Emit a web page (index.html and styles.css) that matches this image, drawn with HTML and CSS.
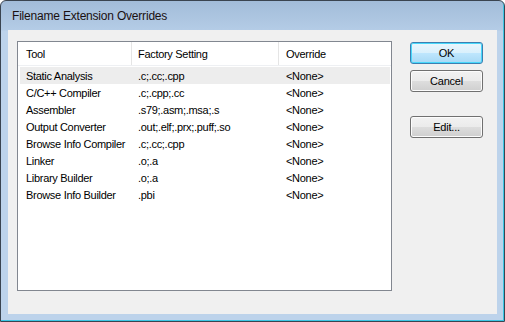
FILE: index.html
```html
<!DOCTYPE html>
<html lang="en">
<head>
    <meta charset="UTF-8">
    <meta name="viewport" content="width=device-width, initial-scale=1.0">
    <title>Filename Extension Overrides</title>
    <link rel="stylesheet" href="styles.css">
</head>
<body>

    <div class="window">
        <div class="titlebar">Filename Extension Overrides</div>

        <div class="client">
            <div class="listbox">
                <div class="row header">
                    <div class="cell col-tool">Tool</div>
                    <div class="cell col-factory">Factory Setting</div>
                    <div class="cell col-override">Override</div>
                </div>
                <div class="row selected">
                    <div class="cell col-tool">Static Analysis</div>
                    <div class="cell col-factory">.c;.cc;.cpp</div>
                    <div class="cell col-override">&lt;None&gt;</div>
                </div>
                <div class="row">
                    <div class="cell col-tool">C/C++ Compiler</div>
                    <div class="cell col-factory">.c;.cpp;.cc</div>
                    <div class="cell col-override">&lt;None&gt;</div>
                </div>
                <div class="row">
                    <div class="cell col-tool">Assembler</div>
                    <div class="cell col-factory">.s79;.asm;.msa;.s</div>
                    <div class="cell col-override">&lt;None&gt;</div>
                </div>
                <div class="row">
                    <div class="cell col-tool">Output Converter</div>
                    <div class="cell col-factory">.out;.elf;.prx;.puff;.so</div>
                    <div class="cell col-override">&lt;None&gt;</div>
                </div>
                <div class="row">
                    <div class="cell col-tool">Browse Info Compiler</div>
                    <div class="cell col-factory">.c;.cc;.cpp</div>
                    <div class="cell col-override">&lt;None&gt;</div>
                </div>
                <div class="row">
                    <div class="cell col-tool">Linker</div>
                    <div class="cell col-factory">.o;.a</div>
                    <div class="cell col-override">&lt;None&gt;</div>
                </div>
                <div class="row">
                    <div class="cell col-tool">Library Builder</div>
                    <div class="cell col-factory">.o;.a</div>
                    <div class="cell col-override">&lt;None&gt;</div>
                </div>
                <div class="row">
                    <div class="cell col-tool">Browse Info Builder</div>
                    <div class="cell col-factory">.pbi</div>
                    <div class="cell col-override">&lt;None&gt;</div>
                </div>
            </div>

            <div class="buttons">
                <button class="btn default">OK</button>
                <button class="btn">Cancel</button>
                <button class="btn edit">Edit...</button>
            </div>
        </div>
    </div>

</body>
</html>
```

FILE: styles.css
```css
body {
    margin: 0;
    font-family: "Liberation Sans", Arial, sans-serif;
    font-size: 11px;
    letter-spacing: -0.3px;
    color: #000;
    background-color: #fff;
}
.window {
    width: 505px;
    height: 322px;
    box-sizing: border-box;
    border: 1px solid #3a4450;
    border-radius: 6px 6px 0 0;
    background: linear-gradient(to bottom, #a2bcd9 0px, #b4cce6 29px, #bdd3eb 30px, #bdd3eb 100%);
    box-shadow: inset -1px -1px 0 #3cc6e4;
    display: flex;
    flex-direction: column;
    overflow: hidden;
}
.titlebar {
    height: 29px;
    line-height: 30px;
    padding-left: 11px;
    font-size: 12px;
    letter-spacing: -0.2px;
    color: #1a1010;
    flex-shrink: 0;
}
.client {
    margin: 0 7px 0 7px;
    height: 284px;
    background-color: #f0f0f0;
    display: flex;
    padding: 11px 0 0 9px;
    box-sizing: border-box;
}
.listbox {
    width: 375px;
    height: 250px;
    box-sizing: border-box;
    border: 1px solid #828790;
    background-color: #fff;
}
.row {
    display: flex;
    height: 17px;
    line-height: 18px;
    margin: 0 1px 0 2px;
}
.row.header {
    height: 23px;
    line-height: 24px;
    margin: 0 0 1px 0;
    border-bottom: 1px solid #eef0f3;
}
.row.selected {
    background-color: #ededed;
}
.cell {
    white-space: nowrap;
    overflow: hidden;
    box-sizing: border-box;
}
.col-tool {
    width: 112px;
    padding-left: 6px;
}
.col-factory {
    width: 147px;
    padding-left: 6px;
}
.col-override {
    flex: 1;
    padding-left: 7px;
}
.header .col-tool {
    width: 114px;
    padding-left: 8px;
}
.header .col-tool,
.header .col-factory {
    border-right: 1px solid #e5e5e5;
}
.buttons {
    display: flex;
    flex-direction: column;
    margin-left: 18px;
    padding-top: 1px;
}
.btn {
    width: 73px;
    height: 22px;
    margin-bottom: 6px;
    padding: 0;
    font-family: "Liberation Sans", Arial, sans-serif;
    font-size: 11px;
    letter-spacing: -0.2px;
    color: #000;
    border: 1px solid #707070;
    border-radius: 3px;
    background: linear-gradient(to bottom, #f2f2f2 0%, #ebebeb 50%, #dddddd 51%, #cfcfcf 100%);
    box-shadow: inset 0 0 0 1px #fcfcfc;
}
.btn.default {
    border-color: #3c7fb1;
    background: linear-gradient(to bottom, #eaf6fd 0%, #d9f0fc 50%, #bee6fd 51%, #a7d9f5 100%);
    box-shadow: inset 0 0 0 1px #48d8fb;
}
.btn.edit {
    margin-top: 18px;
}
```
